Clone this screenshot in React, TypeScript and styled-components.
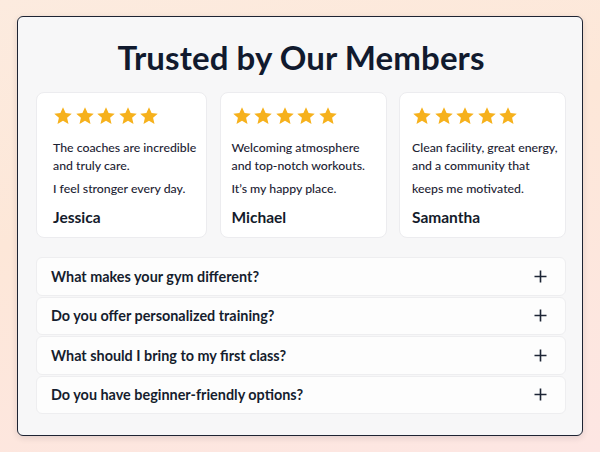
import React from "react";
import styled, { createGlobalStyle } from "styled-components";

const Global = createGlobalStyle`
  html, body {
    margin: 0;
    padding: 0;
  }
  body {
    width: 600px;
    height: 452px;
    overflow: hidden;
    background: linear-gradient(165deg, #fcebdf 0%, #fde7d8 40%, #fde6e3 100%);
    font-family: Lato, "Noto Sans", "Liberation Sans", sans-serif;
    -webkit-font-smoothing: antialiased;
  }
`;

const Page = styled.div`
  padding: 16px 17px;
`;

const Panel = styled.section`
  box-sizing: border-box;
  height: 420px;
  background: #f7f7f8;
  border: 1.5px solid #1e2433;
  border-radius: 6px;
  box-shadow: 0 2px 6px rgba(30, 36, 51, 0.12);
  padding: 20px 16px 0 18px;
`;

const Title = styled.h1`
  margin: 0;
  text-align: center;
  font-size: 33px;
  line-height: 40px;
  font-weight: 700;
  color: #111a2e;
  letter-spacing: 0.1px;
`;

const Reviews = styled.div`
  display: grid;
  grid-template-columns: 171px 167px 167px;
  column-gap: 12.5px;
  margin-top: 15px;
`;

const ReviewCard = styled.article<{ $inset: number }>`
  box-sizing: border-box;
  height: 146px;
  background: #ffffff;
  border: 1px solid #ececef;
  border-radius: 8px;
  padding: 13px 4px 0 ${(p) => p.$inset}px;
  display: flex;
  flex-direction: column;
`;

const Stars = styled.div`
  display: flex;
  gap: 1.5px;
  height: 20px;
`;

const Quote = styled.p`
  margin: 0;
  font-size: 12.3px;
  line-height: 18px;
  font-weight: 500;
  color: #1c2333;
  white-space: nowrap;
  & + & {
    margin-top: 5px;
  }
  &:first-of-type {
    margin-top: 13px;
  }
`;

const Name = styled.div`
  margin-top: 9px;
  font-size: 15.5px;
  line-height: 20px;
  font-weight: 700;
  color: #141b2b;
`;

const Faq = styled.div`
  display: flex;
  flex-direction: column;
  gap: 1px;
  margin-top: 19px;
`;

const FaqRow = styled.button`
  box-sizing: border-box;
  height: 38.5px;
  width: 100%;
  display: flex;
  align-items: center;
  justify-content: space-between;
  padding: 0 18px 0 14px;
  background: #fdfdfd;
  border: 1px solid #eeeef0;
  border-radius: 6px;
  font-family: inherit;
  font-size: 14.4px;
  font-weight: 700;
  color: #161d2e;
  text-align: left;
  cursor: pointer;
`;

const Star = () => (
  <svg width="20" height="20" viewBox="0 0 24 24" aria-hidden="true">
    <path
      d="M12 1.6l3.1 6.9 7.4.7-5.6 5 1.7 7.4L12 17.7l-6.6 3.9 1.7-7.4-5.6-5 7.4-.7z"
      fill="#f6b11c"
    />
  </svg>
);

const Plus = () => (
  <svg width="13" height="13" viewBox="0 0 13 13" aria-hidden="true">
    <path d="M6.5 0.5v12M0.5 6.5h12" stroke="#1d2535" strokeWidth="1.6" />
  </svg>
);

// Each review is a list of paragraphs, each paragraph a list of lines.
const reviews = [
  {
    name: "Jessica",
    inset: 16,
    paragraphs: [["The coaches are incredible", "and truly care."], ["I feel stronger every day."]],
  },
  {
    name: "Michael",
    inset: 11,
    paragraphs: [["Welcoming atmosphere", "and top-notch workouts."], ["It’s my happy place."]],
  },
  {
    name: "Samantha",
    inset: 12,
    paragraphs: [["Clean facility, great energy,", "and a community that"], ["keeps me motivated."]],
  },
];

const questions = [
  "What makes your gym different?",
  "Do you offer personalized training?",
  "What should I bring to my first class?",
  "Do you have beginner-friendly options?",
];

export default function App() {
  return (
    <>
      <Global />
      <Page>
        <Panel>
          <Title>Trusted by Our Members</Title>
          <Reviews>
            {reviews.map((r) => (
              <ReviewCard key={r.name} $inset={r.inset}>
                <Stars>
                  {[0, 1, 2, 3, 4].map((i) => (
                    <Star key={i} />
                  ))}
                </Stars>
                {r.paragraphs.map((lines, pi) => (
                  <Quote key={pi}>
                    {lines.map((l, li) => (
                      <React.Fragment key={l}>
                        {li > 0 && <br />}
                        {l}
                      </React.Fragment>
                    ))}
                  </Quote>
                ))}
                <Name>{r.name}</Name>
              </ReviewCard>
            ))}
          </Reviews>
          <Faq>
            {questions.map((q) => (
              <FaqRow key={q} type="button">
                <span>{q}</span>
                <Plus />
              </FaqRow>
            ))}
          </Faq>
        </Panel>
      </Page>
    </>
  );
}
